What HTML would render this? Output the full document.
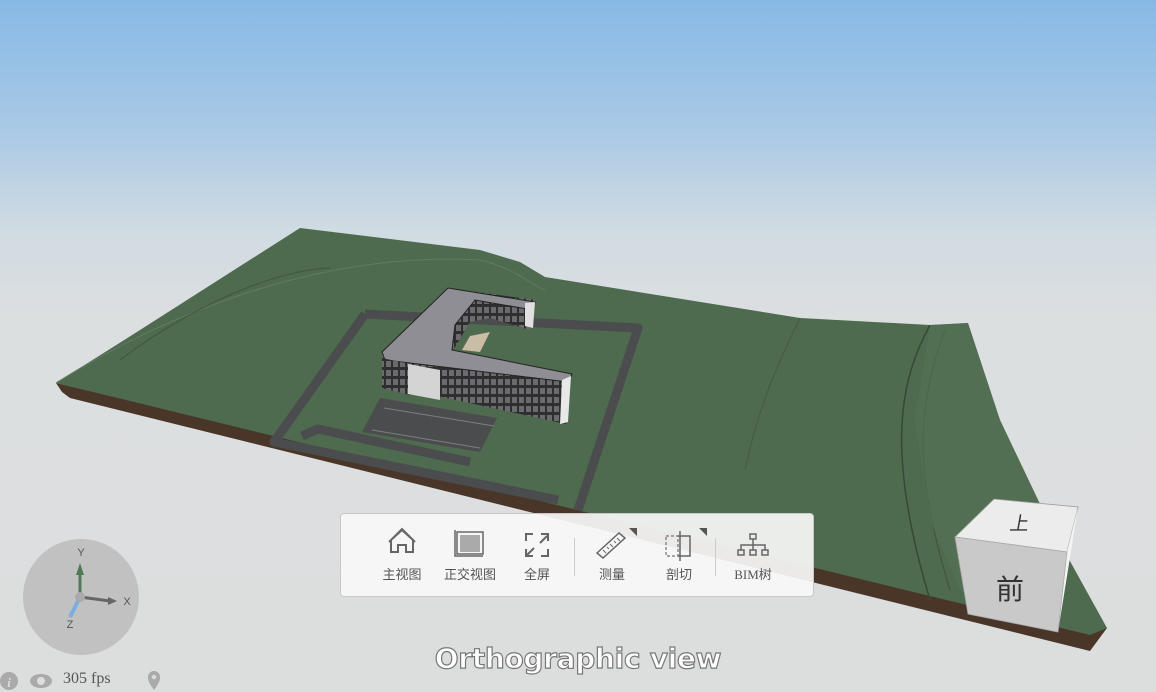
<!DOCTYPE html>
<html><head><meta charset="utf-8"><style>
html,body{margin:0;padding:0;width:1156px;height:692px;overflow:hidden;font-family:"Liberation Sans","Noto Sans CJK SC",sans-serif}
#bg{position:absolute;left:0;top:0;width:1156px;height:692px;background:linear-gradient(#88b9e6 0px,#a9c9e6 130px,#d0dbe2 230px,#dcdfe0 320px,#dcdede 692px)}
svg{position:absolute;left:0;top:0}
.tb{position:absolute;left:340px;top:513px;width:472px;height:82px;background:rgba(248,248,248,0.93);border:1px solid #c8c8c8;border-radius:4px}
.it{position:absolute;top:0;width:70px;text-align:center;font-size:13px;color:#555}
.it span{position:absolute;left:0;width:70px;top:50px}
.sep{position:absolute;top:24px;width:1px;height:38px;background:#ccc}
.ortho{position:absolute;left:0;width:1156px;top:642px;text-align:center;font-size:28px;font-weight:bold;color:#fff;-webkit-text-stroke:1.2px #777;font-family:"DejaVu Sans","Liberation Sans",sans-serif;letter-spacing:-0.3px}
.fps{position:absolute;left:63px;top:670px;font-family:"Liberation Serif",serif;font-size:16px;color:#555}
</style></head><body>
<div id="bg"></div>
<svg width="1156" height="692" viewBox="0 0 1156 692">
<defs>
<pattern id="win" width="7" height="9" patternUnits="userSpaceOnUse">
<rect width="7" height="9" fill="#2e2e30"/><rect x="1" y="1" width="5" height="6" fill="#6b6b6e"/>
</pattern>
</defs>
<polygon points="56,383 1107,628 1090,651 70,398 62,392" fill="#4a3629"/>
<polygon points="56,383 140,330 300,228 480,250 520,262 545,277 800,318 930,325 968,323 1000,420 1050,525 1107,628 1090,635" fill="#4e6a4f"/>
<path d="M56,383 C140,330 300,250 480,260 C520,270 530,285 545,290" stroke="#5f7c60" stroke-width="1" fill="none"/>
<path d="M120,360 C200,300 280,270 330,268" stroke="#40573f" stroke-width="1" fill="none"/>
<path d="M800,318 C780,360 760,400 745,470" stroke="#3e553f" stroke-width="1" fill="none" opacity=".7"/>
<path d="M930,325 C900,380 885,450 930,600" stroke="#344a36" stroke-width="1.5" fill="none"/>
<path d="M945,330 C920,400 910,460 950,590" stroke="#3c533d" stroke-width="1" fill="none"/>
<polygon points="930,325 968,323 1000,420 1050,525 1000,600 960,590 930,520 915,420" fill="#557256" opacity=".6"/>
<g stroke="#4a4c4d" stroke-width="9" fill="none" stroke-linejoin="round">
<polyline points="365,314 638,328 578,510"/>
<polyline points="365,314 274,442 558,500"/>
<polyline points="302,436 318,429 470,462"/>
</g>
<polygon points="380,398 497,418 480,452 362,432" fill="#4a4c4d"/>
<g stroke="#8a8c88" stroke-width="1" opacity=".8">
<line x1="384" y1="408" x2="494" y2="426"/><line x1="372" y1="430" x2="480" y2="448"/>
</g>
<polygon points="382,352 448,288 535,300 530,330 490,318 470,322 452,352 570,375 566,424 382,384" fill="url(#win)"/>
<polygon points="382,352 448,288 535,302 533,310 475,300 455,325 452,350 572,374 568,382 385,360" fill="#8f8e94" stroke="#222" stroke-width="1"/>
<polygon points="382,358 410,364 410,395 382,388" fill="url(#win)"/>
<polygon points="408,364 440,370 440,400 408,394" fill="#d4d4d4"/>
<polygon points="562,380 571,376 568,422 560,424" fill="#e8e8e8"/>
<polygon points="525,303 535,302 533,328 525,326" fill="#e0e0e0"/>
<polygon points="470,336 490,332 480,352 462,350" fill="#c9bda6"/>
<circle cx="81" cy="597" r="58" fill="#c1c1c1"/>
<text x="81" y="556" font-size="11" fill="#555" text-anchor="middle" font-family="Liberation Sans">Y</text>
<text x="127" y="605" font-size="11" fill="#555" text-anchor="middle" font-family="Liberation Sans">X</text>
<text x="70" y="628" font-size="11" fill="#555" text-anchor="middle" font-family="Liberation Sans">Z</text>
<line x1="80" y1="596" x2="80" y2="570" stroke="#4f7a55" stroke-width="3"/>
<polygon points="76,575 84,575 80,563" fill="#4f7a55"/>
<line x1="80" y1="597" x2="110" y2="601" stroke="#666" stroke-width="3"/>
<polygon points="108,597 108,605 117,601" fill="#666"/>
<line x1="80" y1="597" x2="70" y2="617" stroke="#79aee0" stroke-width="4"/>
<circle cx="80" cy="597" r="5" fill="#aaa"/>
<circle cx="9" cy="681" r="9" fill="#aaa"/><text x="9" y="687" font-size="13" fill="#ddd" text-anchor="middle" font-style="italic" font-weight="bold" font-family="Liberation Serif">i</text>
<ellipse cx="41" cy="681" rx="11" ry="7" fill="#aaa"/><circle cx="41" cy="681" r="4" fill="#dcdede"/>
<path d="M154,690 C148,682 148,679 148,677 A6,6 0 0 1 160,677 C160,679 160,682 154,690Z" fill="#aaa"/><circle cx="154" cy="677" r="2.2" fill="#dcdede"/>
<polygon points="955,537 994,499 1078,507 1067,552" fill="#ececec" stroke="#999" stroke-width=".8"/>
<polygon points="1067,552 1078,507 1072,545 1058,632" fill="#f4f4f4"/>
<polygon points="955,537 1067,552 1058,632 968,614" fill="#c8c9c8" stroke="#aaa" stroke-width=".8"/>
<text x="1017" y="530" font-size="19" fill="#333" text-anchor="middle" font-family="Noto Sans CJK SC" transform="skewX(-10) translate(95,0)">上</text>
<text x="1010" y="599" font-size="28" fill="#333" text-anchor="middle" font-family="Noto Sans CJK SC">前</text>
</svg>
<div class="tb">
 <div class="it" style="left:26px"><svg width="70" height="50"><path d="M24,38 V26 L35,16 L46,26 V38 H39 V31 H31 V38 Z M22,28 L35,15 L48,28" stroke="#666" stroke-width="2" fill="none"/></svg><span>主视图</span></div>
 <div class="it" style="left:94px"><svg width="70" height="50"><rect x="22" y="18" width="26" height="22" fill="none" stroke="#666" stroke-width="1.5"/><rect x="25" y="21" width="20" height="17" fill="#aaa"/><path d="M20,16 V42 H48" stroke="#666" stroke-width="1.5" fill="none"/></svg><span>正交视图</span></div>
 <div class="it" style="left:161px"><svg width="70" height="50"><g stroke="#666" stroke-width="2" fill="none"><path d="M24,27 V20 H31 M39,20 H46 V27 M46,35 V42 H39 M31,42 H24 V35"/><path d="M38,29 L45,22 M24,42 L32,34"/></g></svg><span>全屏</span></div>
 <div class="sep" style="left:233px"></div>
 <div class="it" style="left:236px"><svg width="70" height="50"><polygon points="20,39 42,19 48,24 26,44" fill="none" stroke="#666" stroke-width="1.5"/><g stroke="#666" stroke-width="1"><line x1="26" y1="36" x2="29" y2="39"/><line x1="30" y1="33" x2="32" y2="35"/><line x1="33" y1="30" x2="36" y2="33"/><line x1="37" y1="27" x2="39" y2="29"/><line x1="40" y1="24" x2="43" y2="27"/></g><polygon points="52,14 60,14 60,22" fill="#555"/></svg><span>测量</span></div>
 <div class="it" style="left:303px"><svg width="70" height="50"><rect x="22" y="22" width="12" height="20" fill="none" stroke="#888" stroke-width="1.5" stroke-dasharray="3,2"/><path d="M34,22 H46 V42 H34 M36,17 V47" stroke="#666" stroke-width="1.5" fill="none"/><polygon points="55,14 63,14 63,22" fill="#555"/></svg><span>剖切</span></div>
 <div class="sep" style="left:374px"></div>
 <div class="it" style="left:377px"><svg width="70" height="50"><g stroke="#666" stroke-width="1.5" fill="none"><rect x="32" y="20" width="6" height="5"/><rect x="20" y="36" width="6" height="5"/><rect x="32" y="36" width="6" height="5"/><rect x="44" y="36" width="6" height="5"/><path d="M35,25 V31 M23,36 V31 H47 V36 M35,31 V36"/></g></svg><span style="font-family:'Liberation Serif','Noto Sans CJK SC',serif">BIM树</span></div>
</div>
<div class="ortho">Orthographic view</div>
<div class="fps">305 fps</div>
</body></html>
